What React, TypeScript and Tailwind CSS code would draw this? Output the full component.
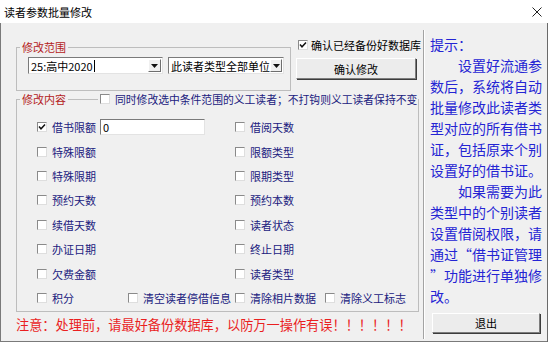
import React from "react";

const CJK = "font-['Noto_Sans_CJK_SC','Noto_Sans_CJK_JP',sans-serif]";

function Check({ checked = false }: { checked?: boolean }) {
  return (
    <span className="flex h-[10px] w-[10px] shrink-0 items-center justify-center border border-t-[#8a8a8a] border-l-[#8a8a8a] border-b-[#dedede] border-r-[#dedede] bg-white">
      {checked && (
        <svg viewBox="0 0 8 8" className="h-[8px] w-[8px]">
          <path d="M1 3.6 L3 5.8 L7 1.6" stroke="#111" strokeWidth="1.5" fill="none" />
        </svg>
      )}
    </span>
  );
}

function CheckItem({ label, checked, size = "text-[11px]" }: { label: string; checked?: boolean; size?: string }) {
  return (
    <div className="flex shrink-0 items-center gap-[5px]">
      <Check checked={checked} />
      <span className={`shrink-0 whitespace-nowrap leading-[14px] text-[#20207e] ${size}`}>{label}</span>
    </div>
  );
}

function Combo({ text, width, caret }: { text: string; width: string; caret?: boolean }) {
  return (
    <div className={`flex h-[17px] ${width} items-center border border-t-[#7a7a7a] border-l-[#7a7a7a] border-b-[#e3e3e3] border-r-[#e3e3e3] bg-white`}>
      <span className="flex flex-1 items-center whitespace-nowrap pl-[2px] text-[11px] leading-[14px] text-black">
        {text}
        {caret && <span className="ml-[1px] h-[12px] w-px bg-black" />}
      </span>
      <span className="mr-px flex h-[13px] w-[13px] items-center justify-center border border-t-white border-l-white border-b-[#6e6e6e] border-r-[#6e6e6e] bg-[#f0f0f0]">
        <svg viewBox="0 0 7 4" className="h-[4px] w-[7px]">
          <path d="M0 0 H7 L3.5 4 Z" fill="#111" />
        </svg>
      </span>
    </div>
  );
}

function Button({ label, className }: { label: string; className: string }) {
  return (
    <div
      className={`flex items-center justify-center border border-t-white border-l-white border-b-[#7d7d7d] border-r-[#7d7d7d] bg-[#ececec] text-[11px] leading-[14px] text-black shadow-[1px_1px_0_#3c3c3c] ${className}`}
    >
      {label}
    </div>
  );
}

const LEFT = ["借书限额", "特殊限额", "特殊限期", "预约天数", "续借天数", "办证日期", "欠费金额"];
const RIGHT = ["借阅天数", "限额类型", "限期类型", "预约本数", "读者状态", "终止日期", "读者类型"];

const TIPS: { t: React.ReactNode; indent?: boolean }[] = [
  { t: "提示：" },
  { t: "设置好流通参", indent: true },
  { t: "数后，系统将自动" },
  { t: "批量修改此读者类" },
  { t: "型对应的所有借书" },
  { t: "证，包括原来个别" },
  { t: "设置好的借书证。" },
  { t: "如果需要为此", indent: true },
  { t: "类型中的个别读者" },
  { t: "设置借阅权限，请" },
  {
    t: (
      <>
        通过<span className="inline-block w-[14px] text-right">“</span>借书证管理
      </>
    ),
  },
  {
    t: (
      <>
        <span className="inline-block w-[14px] text-left">”</span>功能进行单独修
      </>
    ),
  },
  { t: "改。" },
];

export default function App() {
  return (
    <div className={`flex h-[342px] w-[551px] flex-col bg-[#f0f0f0] shadow-[inset_1px_0_0_#7a7a7a,inset_-3px_0_0_#ffffff,inset_-4px_0_0_#6a6a6a,inset_0_-1px_0_#7a7a7a] ${CJK}`}>
      {/* title bar */}
      <div className="flex h-[23px] shrink-0 items-center justify-between bg-white pl-[4px] pr-[9px]">
        <span className="text-[11px] leading-[14px] text-black">读者参数批量修改</span>
        <svg viewBox="0 0 10 10" className="h-[10px] w-[10px]">
          <path d="M0.5 0.5 L9.5 9.5 M9.5 0.5 L0.5 9.5" stroke="#222" strokeWidth="1" />
        </svg>
      </div>

      <div className="flex flex-1">
        {/* left area */}
        <div className="flex w-[423px] shrink-0 flex-col pl-[16px]">
          <div className="flex items-start">
            <fieldset className="mt-[17px] h-[51px] w-[275px] border border-[#bdbdbd]">
              <legend className="ml-[3px] px-[2px] text-[11px] leading-[14px] text-[#b42222]">修改范围</legend>
              <div className="mt-[3px] flex gap-[5px] pl-[11px]">
                <Combo text="25:高中2020" width="w-[135px]" caret />
                <Combo text="此读者类型全部单位" width="w-[116px]" />
              </div>
            </fieldset>

            <div className="ml-[5px] mt-[15px] flex w-[121px] flex-col">
              <div className="flex h-[14px] items-center gap-[3px] pl-[2px]">
                <Check checked />
                <span className="whitespace-nowrap text-[11px] leading-[14px] text-black">确认已经备份好数据库</span>
              </div>
              <Button label="确认修改" className="mt-[6px] h-[21px] w-[120px]" />
            </div>
          </div>

          <fieldset className="mt-[1px] h-[220px] w-[399px] border border-[#bdbdbd]">
            <legend className="ml-[3px] flex items-center whitespace-nowrap pl-[2px] pr-[1px]">
              <span className="shrink-0 text-[11px] leading-[14px] text-[#b42222]">修改内容</span>
              <span className="ml-[2px] mr-[2px] h-px w-[30px] shrink-0 bg-[#bdbdbd]" />
              <CheckItem label="同时修改选中条件范围的义工读者；不打钩则义工读者保持不变" size="text-[10.8px]" />
            </legend>
            <div className="pl-[20px] pt-[9px]">
              <div className="grid auto-rows-[24.4px] grid-cols-[198px_1fr] items-center">
                {LEFT.map((l, i) => (
                  <React.Fragment key={l}>
                    <div className="flex items-center">
                      <CheckItem label={l} checked={i === 0} />
                      {i === 0 && (
                        <div className="ml-[4px] flex h-[16px] w-[105px] items-center border border-t-[#7a7a7a] border-l-[#7a7a7a] border-b-[#e3e3e3] border-r-[#e3e3e3] bg-white pl-[2px] text-[11px] leading-[14px] text-black">
                          0
                        </div>
                      )}
                    </div>
                    <CheckItem label={RIGHT[i]} />
                  </React.Fragment>
                ))}
              </div>
              <div className="flex h-[24.4px] items-center">
                <div className="w-[91px]">
                  <CheckItem label="积分" />
                </div>
                <div className="w-[107px]">
                  <CheckItem label="清空读者停借信息" />
                </div>
                <div className="w-[90px]">
                  <CheckItem label="清除相片数据" />
                </div>
                <CheckItem label="清除义工标志" />
              </div>
            </div>
          </fieldset>

          <div className="mt-[4px] whitespace-nowrap text-[13.2px] leading-[18px] text-[#ea1f1f]">
            注意：处理前，请最好备份数据库，以防万一操作有误！！！！！！
          </div>
        </div>

        {/* separator */}
        <div className="mb-[3px] mt-[7px] w-px bg-[#a3a3a3]" />
        <div className="mb-[3px] mt-[7px] w-px bg-white" />

        {/* tips panel */}
        <div className="flex flex-col pl-[5px] pt-[10.5px]">
          {TIPS.map((line, i) => (
            <div
              key={i}
              className={`whitespace-nowrap text-[14px] leading-[21px] text-[#2424d4] ${line.indent ? "pl-[28px]" : ""}`}
            >
              {line.t}
            </div>
          ))}
          <Button label="退出" className="ml-[2px] mt-[6.5px] h-[20px] w-[108px]" />
        </div>
      </div>
    </div>
  );
}
